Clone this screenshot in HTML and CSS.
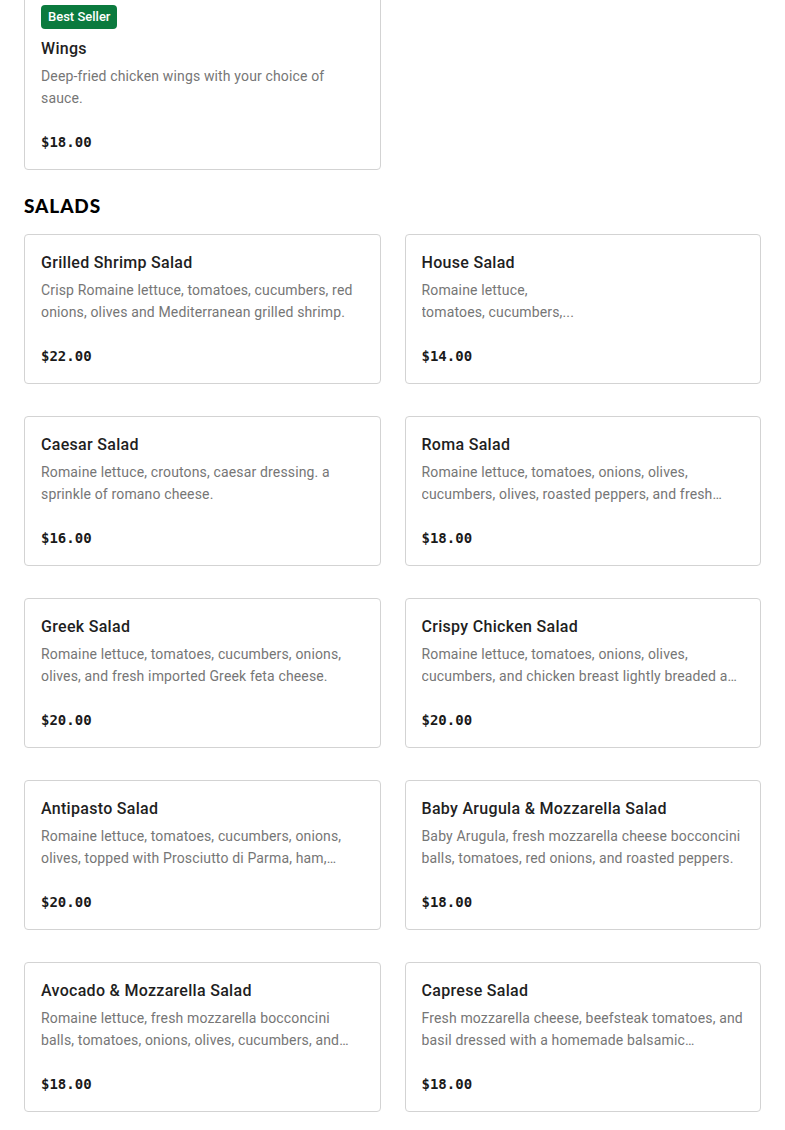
FILE: index.html
```html
<!DOCTYPE html>
<html lang="en">
<head>
<meta charset="utf-8">
<title>Menu</title>
<link rel="stylesheet" href="styles.css">
</head>
<body>
<main class="menu">
  <section class="section section-first">
    <div class="grid">
      <article class="card">
        <span class="badge">Best Seller</span>
        <h3 class="title">Wings</h3>
        <p class="desc">Deep-fried chicken wings with your choice of sauce.</p>
        <p class="price">$18.00</p>
      </article>
    </div>
  </section>
  <section class="section">
    <h2 class="section-title">SALADS</h2>
    <div class="grid">
      <article class="card">
        <h3 class="title">Grilled Shrimp Salad</h3>
        <p class="desc">Crisp Romaine lettuce, tomatoes, cucumbers, red onions, olives and Mediterranean grilled shrimp.</p>
        <p class="price">$22.00</p>
      </article>
      <article class="card">
        <h3 class="title">House Salad</h3>
        <p class="desc">Romaine lettuce,<br>tomatoes, cucumbers,...</p>
        <p class="price">$14.00</p>
      </article>
      <article class="card">
        <h3 class="title">Caesar Salad</h3>
        <p class="desc">Romaine lettuce, croutons, caesar dressing. a sprinkle of romano cheese.</p>
        <p class="price">$16.00</p>
      </article>
      <article class="card">
        <h3 class="title">Roma Salad</h3>
        <p class="desc">Romaine lettuce, tomatoes, onions, olives, cucumbers, olives, roasted peppers, and fresh mozzarella cheese.</p>
        <p class="price">$18.00</p>
      </article>
      <article class="card">
        <h3 class="title">Greek Salad</h3>
        <p class="desc">Romaine lettuce, tomatoes, cucumbers, onions, olives, and fresh imported Greek feta cheese.</p>
        <p class="price">$20.00</p>
      </article>
      <article class="card">
        <h3 class="title">Crispy Chicken Salad</h3>
        <p class="desc">Romaine lettuce, tomatoes, onions, olives, cucumbers, and chicken breast lightly breaded and fried.</p>
        <p class="price">$20.00</p>
      </article>
      <article class="card">
        <h3 class="title">Antipasto Salad</h3>
        <p class="desc">Romaine lettuce, tomatoes, cucumbers, onions, olives, topped with Prosciutto di Parma, ham, salami and provolone.</p>
        <p class="price">$20.00</p>
      </article>
      <article class="card">
        <h3 class="title">Baby Arugula &amp; Mozzarella Salad</h3>
        <p class="desc">Baby Arugula, fresh mozzarella cheese bocconcini balls, tomatoes, red onions, and roasted peppers.</p>
        <p class="price">$18.00</p>
      </article>
      <article class="card">
        <h3 class="title">Avocado &amp; Mozzarella Salad</h3>
        <p class="desc">Romaine lettuce, fresh mozzarella bocconcini balls, tomatoes, onions, olives, cucumbers, and avocado.</p>
        <p class="price">$18.00</p>
      </article>
      <article class="card">
        <h3 class="title">Caprese Salad</h3>
        <p class="desc">Fresh mozzarella cheese, beefsteak tomatoes, and basil dressed with a homemade balsamic vinaigrette.</p>
        <p class="price">$18.00</p>
      </article>
    </div>
  </section>
</main>
</body>
</html>
```
FILE: styles.css
```css
* { box-sizing: border-box; }
html, body { margin: 0; padding: 0; background: #fff; }
body {
  font-family: "Roboto", "Liberation Sans", sans-serif;
  color: #191919;
}
.menu { padding: 0 24px; }
.section-first { margin-top: -12px; }
.section-title {
  margin: 24px 0 16px;
  font-family: "Lato", "Liberation Sans", sans-serif;
  font-weight: 900;
  font-size: 19px;
  line-height: 24px;
  letter-spacing: 0.9px;
  color: #000;
}
.grid {
  display: grid;
  grid-template-columns: 1fr 1fr;
  column-gap: 24px;
  row-gap: 32px;
}
.card {
  border: 1px solid #d3d3d3;
  border-radius: 4px;
  padding: 16px;
  display: flex;
  flex-direction: column;
  align-items: flex-start;
  background: #fff;
}
.badge {
  display: inline-block;
  height: 24px;
  line-height: 24px;
  padding: 0 7px;
  border-radius: 4px;
  background: #0b7a3e;
  color: #fff;
  font-size: 13px;
  font-weight: 500;
  margin-bottom: 8px;
}
.title {
  margin: 0 0 4px;
  font-size: 16px;
  line-height: 24px;
  font-weight: 500;
  letter-spacing: 0.3px;
  color: #1f1f1f;
}
.desc {
  margin: 0 0 22px;
  font-size: 14px;
  line-height: 22px;
  letter-spacing: 0.15px;
  color: #767676;
  height: 44px;
  display: -webkit-box;
  -webkit-line-clamp: 2;
  -webkit-box-orient: vertical;
  overflow: hidden;
}
.price {
  margin: 0;
  font-family: "DejaVu Sans Mono", "Liberation Mono", monospace;
  font-weight: 700;
  font-size: 14px;
  line-height: 22px;
  color: #1a1a1a;
}
```
